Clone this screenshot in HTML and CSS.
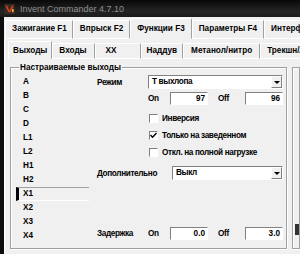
FILE: index.html
```html
<!DOCTYPE html>
<html lang="ru">

<head>
    <meta charset="UTF-8">
    <meta name="viewport" content="width=device-width, initial-scale=1.0">
    <title>Invent Commander 4.7.10</title>
    <link rel="stylesheet" href="styles.css">
</head>

<body>
    <div class="window">
        <!-- заголовок окна -->
        <div class="titlebar">
            <svg class="app-icon" viewBox="0 0 12 12">
                <rect width="12" height="12" fill="#3b2a22" />
                <path d="M1 2 L5 10 L7 10 L11 2 L9 2 L6 8 L3 2 Z" fill="#e2421d" />
                <path d="M9 6 L11 6 L11 10 L9 10 Z" fill="#e8b33a" />
            </svg>
            <span class="title">Invent Commander 4.7.10</span>
        </div>

        <div class="client">
            <div class="tabs main-tabs">
                <div class="tab">Зажигание F1</div>
                <div class="tab">Впрыск F2</div>
                <div class="tab active">Функции F3</div>
                <div class="tab">Параметры F4</div>
                <div class="tab">Интерфейс F5</div>
                <div class="tab-rest"></div>
            </div>

            <div class="page">
                <div class="tabs sub-tabs">
                    <div class="tab active">Выходы</div>
                    <div class="tab">Входы</div>
                    <div class="tab xx">ХХ</div>
                    <div class="tab">Наддув</div>
                    <div class="tab">Метанол/нитро</div>
                    <div class="tab">Трекшн/Лаунч</div>
                    <div class="tab-rest"></div>
                </div>

                <div class="sub-page">
                    <fieldset class="group outputs">
                        <legend>Настраиваемые выходы</legend>

                        <ul class="out-list">
                            <li>A</li>
                            <li>B</li>
                            <li>C</li>
                            <li>D</li>
                            <li>L1</li>
                            <li>L2</li>
                            <li>H1</li>
                            <li>H2</li>
                            <li class="selected">X1</li>
                            <li>X2</li>
                            <li>X3</li>
                            <li>X4</li>
                        </ul>

                        <div class="settings">
                            <div class="row mode-row">
                                <span class="label">Режим</span>
                                <div class="combo wide">
                                    <span class="combo-text">Т выхлопа</span>
                                    <span class="combo-btn"></span>
                                </div>
                            </div>
                            <div class="row onoff-row">
                                <span class="label"></span>
                                <span class="on">On</span>
                                <span class="field">97</span>
                                <span class="off">Off</span>
                                <span class="field">96</span>
                            </div>
                            <div class="check-row first">
                                <span class="box"></span>
                                <span>Инверсия</span>
                            </div>
                            <div class="check-row">
                                <span class="box">
                                    <svg viewBox="0 0 7 7"><path d="M0.5 3 L2.5 5.2 L6.5 1" stroke="#000" stroke-width="1.4" fill="none" /></svg>
                                </span>
                                <span>Только на заведенном</span>
                            </div>
                            <div class="check-row">
                                <span class="box"></span>
                                <span>Откл. на полной нагрузке</span>
                            </div>
                            <div class="row extra-row">
                                <span class="label long">Дополнительно</span>
                                <div class="combo">
                                    <span class="combo-text">Выкл</span>
                                    <span class="combo-btn"></span>
                                </div>
                            </div>
                            <div class="row delay-row">
                                <span class="label">Задержка</span>
                                <span class="on">On</span>
                                <span class="field">0.0</span>
                                <span class="off">Off</span>
                                <span class="field">3.0</span>
                            </div>
                        </div>
                    </fieldset>

                    <fieldset class="group side">
                        <div class="side-mark"></div>
                    </fieldset>
                </div>
            </div>
        </div>
    </div>
</body>

</html>
```

FILE: styles.css
```css
* {
    margin: 0;
    padding: 0;
    box-sizing: border-box;
}

body {
    width: 300px;
    height: 254px;
    overflow: hidden;
    font-family: "Liberation Sans", Arial, sans-serif;
    font-size: 8.2px;
    font-weight: bold;
    color: #000;
    background-color: #111;
}

.window {
    display: flex;
    flex-direction: column;
    height: 254px;
}

/* заголовок */
.titlebar {
    height: 17px;
    display: flex;
    align-items: center;
    padding-left: 4px;
    background: linear-gradient(#080808, #242424 65%, #1b1b1b);
}

.app-icon {
    width: 11px;
    height: 10px;
    margin-right: 5px;
}

.title {
    font-weight: normal;
    font-size: 9px;
    color: #8e8e8e;
}

.client {
    flex: 1;
    display: flex;
    flex-direction: column;
    background-color: #f0f0f0;
    border-left: 4px solid #0c0c0c;
}

/* вкладки */
.tabs {
    display: flex;
    align-items: flex-end;
    white-space: nowrap;
}

.tab {
    height: 19px;
    line-height: 16px;
    padding: 0 6px;
    border: 1px solid;
    border-color: #fff #a0a0a0 #fff #fff;
}

.tab.active {
    height: 21px;
    padding-top: 2px;
    border-bottom-color: transparent;
}

.tab-rest {
    flex: 1;
    border-bottom: 1px solid #fff;
}

.main-tabs {
    height: 22px;
    padding-left: 1px;
}

.main-tabs .tab:first-child {
    padding: 0 5px 0 6px;
}

.page {
    flex: 1;
    display: flex;
    flex-direction: column;
    padding: 2px 0 0 3px;
    border-left: 1px solid #fff;
}

.sub-tabs {
    height: 18px;
}

.sub-tabs .tab {
    height: 16px;
    line-height: 14px;
    padding: 0 6px;
}

.sub-tabs .tab.active {
    height: 18px;
    padding: 2px 4px 0;
}

.sub-tabs .tab:nth-child(2) {
    padding: 0 7px 0 6px;
}

.sub-tabs .tab.xx {
    padding: 0 23px 0 10px;
}

.sub-tabs .tab:nth-child(4) {
    padding: 0 5px;
}

.sub-tabs .tab:nth-child(5) {
    padding: 0 7px;
}

.sub-page {
    flex: 1;
    display: flex;
    gap: 5px;
    padding: 3px 0 0 2px;
}

/* группы */
.group {
    border: 1px solid #a0a0a0;
    box-shadow: inset 1px 1px 0 #fff, 1px 1px 0 #fff;
}

.group legend {
    margin-left: 3px;
    padding: 0 1px;
    line-height: 11px;
}

.outputs {
    width: 279px;
    height: 187px;
    display: flex;
    padding: 2px 0 7px 5px;
}

.side {
    flex: 1;
    height: 182px;
    margin-top: 5px;
    padding-top: 156px;
}

.side-mark {
    width: 4px;
    height: 11px;
    margin-left: 2px;
    background-color: #333;
}

/* список выходов */
.out-list {
    list-style: none;
    width: 73px;
    margin-right: 8px;
}

.out-list li {
    height: 14px;
    line-height: 14px;
    padding-left: 7px;
}

.out-list li.selected {
    line-height: 12px;
    border-top: 1px solid #a0a0a0;
    border-bottom: 1px solid #fff;
    border-left: 3px solid #000;
    padding-left: 4px;
}

/* настройки */
.settings {
    display: flex;
    flex-direction: column;
    letter-spacing: -0.35px;
}

.row {
    display: flex;
    align-items: center;
    height: 14px;
}

.label {
    width: 51px;
}

.label.long {
    width: 75px;
}

.onoff-row {
    margin-top: 2px;
}

.on {
    width: 22px;
}

.off {
    width: 27px;
    margin-left: 10px;
}

.field {
    width: 38px;
    height: 13px;
    line-height: 11px;
    padding-right: 2px;
    text-align: right;
    letter-spacing: 0;
    background-color: #fff;
    border: 1px solid;
    border-color: #808080 #fff #fff #808080;
}

.combo {
    width: 111px;
    height: 14px;
    display: flex;
    background-color: #fff;
    border: 1px solid;
    border-color: #808080 #fff #fff #808080;
}

.combo.wide {
    width: 135px;
}

.combo-text {
    flex: 1;
    line-height: 12px;
    padding-left: 3px;
}

.combo-btn {
    width: 11px;
    display: flex;
    align-items: center;
    justify-content: center;
    background-color: #f0f0f0;
    border: 1px solid;
    border-color: #fff #808080 #808080 #fff;
}

.combo-btn::after {
    content: "";
    border-top: 3px solid #000;
    border-left: 3px solid transparent;
    border-right: 3px solid transparent;
}

.check-row {
    display: flex;
    align-items: center;
    height: 16px;
    padding-left: 52px;
    gap: 4px;
}

.check-row.first {
    margin-top: 5px;
}

.check-row + .check-row {
    margin-top: 1px;
}

.box {
    width: 9px;
    height: 9px;
    display: flex;
    align-items: center;
    justify-content: center;
    background-color: #fff;
    border: 1px solid;
    border-color: #808080 #fff #fff #808080;
}

.box svg {
    width: 7px;
    height: 7px;
}

.extra-row {
    margin-top: 6px;
}

.delay-row {
    margin-top: auto;
    margin-bottom: 1px;
}
```
